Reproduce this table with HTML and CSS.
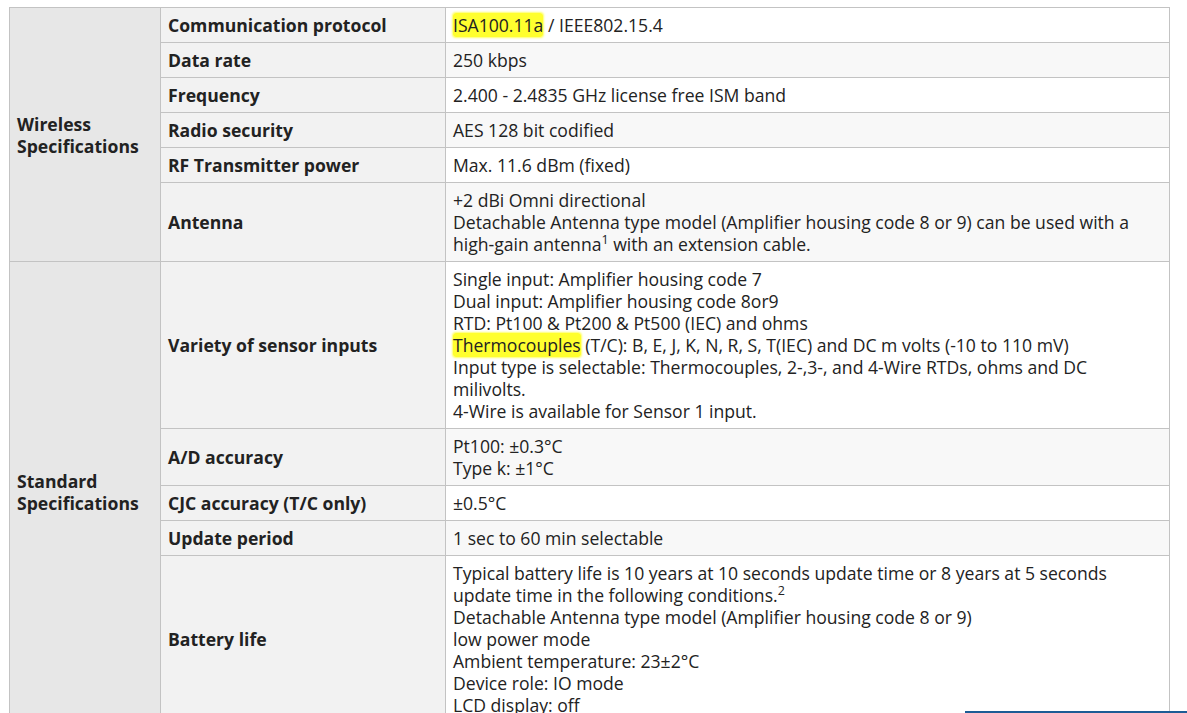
FILE: index.html
```html
<!DOCTYPE html>
<html>
<head>
<meta charset="utf-8">
<link rel="stylesheet" href="styles.css">
</head>
<body>
<table class="spec">
  <colgroup>
    <col class="c1"><col class="c2"><col class="c3">
  </colgroup>
  <tbody>
    <tr>
      <th class="group" rowspan="6">Wireless<br>Specifications</th>
      <th class="label">Communication protocol</th>
      <td class="val"><span class="hl">ISA100.11a</span> / IEEE802.15.4</td>
    </tr>
    <tr class="alt">
      <th class="label">Data rate</th>
      <td class="val">250 kbps</td>
    </tr>
    <tr>
      <th class="label">Frequency</th>
      <td class="val">2.400 - 2.4835 GHz license free ISM band</td>
    </tr>
    <tr class="alt">
      <th class="label">Radio security</th>
      <td class="val">AES 128 bit codified</td>
    </tr>
    <tr>
      <th class="label">RF Transmitter power</th>
      <td class="val">Max. 11.6 dBm (fixed)</td>
    </tr>
    <tr class="alt">
      <th class="label">Antenna</th>
      <td class="val">+2 dBi Omni directional<br>Detachable Antenna type model (Amplifier housing code 8 or 9) can be used with a high&#8209;gain antenna<sup>1</sup> with an extension cable.</td>
    </tr>
    <tr>
      <th class="group" rowspan="5">Standard<br>Specifications</th>
      <th class="label">Variety of sensor inputs</th>
      <td class="val">Single input: Amplifier housing code 7<br>Dual input: Amplifier housing code 8or9<br>RTD: Pt100 &amp; Pt200 &amp; Pt500 (IEC) and ohms<br><span class="hl">Thermocouples</span> (T/C): B, E, J, K, N, R, S, T(IEC) and DC m volts (-10 to 110 mV)<br>Input type is selectable: Thermocouples, 2-,3-, and 4-Wire RTDs, ohms and DC milivolts.<br>4-Wire is available for Sensor 1 input.</td>
    </tr>
    <tr class="alt">
      <th class="label">A/D accuracy</th>
      <td class="val">Pt100: ±0.3°C<br>Type k: ±1°C</td>
    </tr>
    <tr>
      <th class="label">CJC accuracy (T/C only)</th>
      <td class="val">±0.5°C</td>
    </tr>
    <tr class="alt">
      <th class="label">Update period</th>
      <td class="val">1 sec to 60 min selectable</td>
    </tr>
    <tr>
      <th class="label">Battery life</th>
      <td class="val">Typical battery life is 10 years at 10 seconds update time or 8 years at 5 seconds update time in the following conditions.<sup>2</sup><br>Detachable Antenna type model (Amplifier housing code 8 or 9)<br>low power mode<br>Ambient temperature: 23±2°C<br>Device role: IO mode<br>LCD display: off</td>
    </tr>
  </tbody>
</table>
<div class="scrollbar-line"></div>
</body>
</html>
```

FILE: styles.css
```css
html, body {
  margin: 0;
  padding: 0;
  background: #ffffff;
}
body {
  padding: 7px 0 0 9px;
  font-family: "Open Sans", "Noto Sans", sans-serif;
  font-size: 17.6px;
  line-height: 22px;
  color: #222222;
  overflow: hidden;
  height: 713px;
  box-sizing: border-box;
}
.spec {
  border-collapse: collapse;
  width: 1160px;
  table-layout: fixed;
}
.c1 { width: 151px; }
.c2 { width: 285px; }
.c3 { width: 724px; }
.spec th,
.spec td {
  border: 1px solid #c3c3c3;
  padding: 6px 7px;
  text-align: left;
  vertical-align: middle;
}
.spec th {
  font-weight: 700;
}
.group {
  background: #e7e7e7;
}
.label {
  background: #f2f2f2;
}
.val {
  background: #ffffff;
  font-weight: 400;
}
.alt .val {
  background: #f8f8f8;
}
.hl {
  background: #ffff2e;
  border-radius: 3px;
  box-shadow: 0 0 2px 1px #ffff66;
}
sup {
  font-size: 12.5px;
  line-height: 1;
  vertical-align: 7px;
}
.scrollbar-line {
  position: absolute;
  left: 965px;
  top: 711px;
  width: 222px;
  height: 2px;
  background: #1d5c95;
}
```
